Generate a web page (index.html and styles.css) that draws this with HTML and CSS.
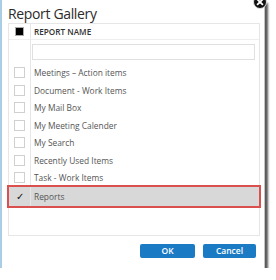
FILE: index.html
```html
<!DOCTYPE html>
<html>
<head>
<meta charset="utf-8">
<link rel="stylesheet" href="styles.css">
</head>
<body>
<div class="dialog">
  <div class="close"><svg width="14" height="14" viewBox="0 0 14 14"><circle cx="7" cy="7" r="6.5" fill="#111" stroke="#e0e0e0" stroke-width="1"/><path d="M4.6 7.6 L9.4 12.4 M9.4 7.6 L4.6 12.4" stroke="#fff" stroke-width="1.8" stroke-linecap="round" transform="translate(0,-3)"/></svg></div>
  <div class="title">Report Gallery</div>
  <div class="list">
    <div class="row head">
      <div class="cbcell"><span class="cb-all"></span></div>
      <div class="name">REPORT NAME</div>
    </div>
    <div class="row filter">
      <div class="cbcell"></div>
      <div class="name"><div class="input"></div></div>
    </div>
    <div class="row item"><div class="cbcell"><span class="cb"></span></div><div class="name">Meetings – Action items</div></div>
    <div class="row item"><div class="cbcell"><span class="cb"></span></div><div class="name">Document - Work Items</div></div>
    <div class="row item"><div class="cbcell"><span class="cb"></span></div><div class="name">My Mail Box</div></div>
    <div class="row item"><div class="cbcell"><span class="cb"></span></div><div class="name">My Meeting Calender</div></div>
    <div class="row item"><div class="cbcell"><span class="cb"></span></div><div class="name">My Search</div></div>
    <div class="row item"><div class="cbcell"><span class="cb"></span></div><div class="name">Recently Used Items</div></div>
    <div class="row item"><div class="cbcell"><span class="cb"></span></div><div class="name">Task - Work Items</div></div>
    <div class="row item selected"><div class="cbcell"><span class="cb checked">✓</span></div><div class="name">Reports</div></div>
  </div>
  <div class="actions">
    <button class="btn ok">OK</button>
    <button class="btn cancel">Cancel</button>
  </div>
</div>
</body>
</html>
```
FILE: styles.css
```css
html, body {
  margin: 0;
  padding: 0;
  background: #fff;
}
body {
  font-family: "Open Sans", "Liberation Sans", sans-serif;
  overflow: hidden;
}
.dialog {
  position: relative;
  width: 262px;
  height: 268px;
  border-left: 2px solid #a9cde3;
  border-right: 1px solid #c4c4c4;
  box-shadow: 3px 3px 2px #5a5a5a;
  background: #fff;
  box-sizing: content-box;
}
.close {
  position: absolute;
  left: 251px;
  top: -5px;
  width: 14px;
  height: 14px;
  line-height: 0;
}
.title {
  padding: 5px 0 0 6px;
  height: 23px;
  box-sizing: border-box;
  font-size: 14px;
  letter-spacing: -0.35px;
  color: #2b2b2b;
  line-height: 17px;
}
.list {
  margin-left: 6px;
  width: 252px;
  height: 213px;
  border: 1px solid #e6e6e6;
  box-sizing: border-box;
}
.row {
  display: flex;
  align-items: stretch;
}
.cbcell {
  width: 21px;
  border-right: 1px solid #e6e6e6;
  display: flex;
  align-items: center;
  justify-content: center;
  flex: none;
}
.name {
  flex: 1;
  display: flex;
  align-items: center;
  padding-left: 3px;
  font-size: 8.4px;
  color: #555;
  white-space: nowrap;
}
.head {
  height: 15px;
  border-bottom: 1px solid #eee;
}
.head .name {
  font-size: 8.2px;
  font-weight: 600;
  color: #333;
}
.cb-all {
  display: inline-block;
  width: 7px;
  height: 7px;
  background: #000;
  border: 1px solid #aaa;
}
.filter {
  height: 24px;
}
.filter .name {
  padding-left: 1px;
  padding-right: 4px;
}
.input {
  width: 100%;
  height: 16px;
  border: 1px solid #e0e0e0;
  box-sizing: border-box;
}
.item {
  height: 17.5px;
}
.cb {
  display: inline-block;
  width: 11px;
  height: 11px;
  border: 1px solid #d0d0d0;
  box-sizing: border-box;
  background: #fff;
}
.cb.checked {
  border: none;
  background: transparent;
  font-size: 10px;
  line-height: 11px;
  text-align: center;
  color: #111;
}
.selected {
  height: 19px;
  background: #d8d8d8;
  outline: 2px solid #d9504e;
  outline-offset: 0;
  position: relative;
}
.actions {
  display: flex;
  justify-content: flex-end;
  gap: 8px;
  padding: 8px 8px 0 0;
}
.btn {
  margin: 0;
  height: 14px;
  border: none;
  border-radius: 2px;
  background: #1a7bc4;
  color: #fff;
  font-family: "Open Sans", "Liberation Sans", sans-serif;
  font-size: 8.5px;
  font-weight: 600;
  padding: 0;
  line-height: 14px;
}
.ok { width: 55px; }
.cancel { width: 53px; }
```
